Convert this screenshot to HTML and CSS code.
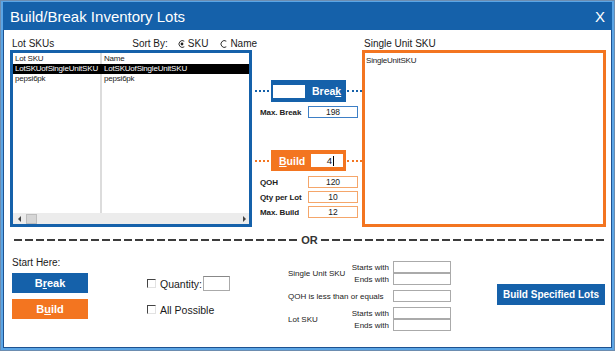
FILE: index.html
```html
<!DOCTYPE html>
<html lang="en">
<head>
    <meta charset="UTF-8">
    <meta name="viewport" content="width=device-width, initial-scale=1.0">
    <title>Build/Break Inventory Lots</title>
    <link rel="stylesheet" href="styles.css">
</head>
<body>
    <div class="window">
        <div class="inner">
            <div class="titlebar">
                <span>Build/Break Inventory Lots</span>
                <span class="close">X</span>
            </div>

            <div class="top">
                <!-- lot list -->
                <div class="col-left">
                    <div class="col-head">
                        <span>Lot SKUs</span>
                        <div class="sort">
                            <span>Sort By:</span>
                            <span class="radio">
                                <svg width="8" height="8" viewBox="0 0 8 8"><path d="M6.3 1.2 A3.4 3.4 0 1 0 6.3 6.8" stroke="#333" stroke-width="1" fill="none"/><circle cx="4" cy="4" r="1.4" fill="#222"/></svg>
                                SKU
                            </span>
                            <span class="radio">
                                <svg width="8" height="8" viewBox="0 0 8 8"><path d="M6.3 1.2 A3.4 3.4 0 1 0 6.3 6.8" stroke="#333" stroke-width="1" fill="none"/></svg>
                                Name
                            </span>
                        </div>
                    </div>
                    <div class="listbox">
                        <div class="rows">
                            <div class="row row-head"><span>Lot SKU</span><span>Name</span></div>
                            <div class="row selected"><span>LotSKUofSingleUnitSKU</span><span>LotSKUofSingleUnitSKU</span></div>
                            <div class="row"><span>pepsi6pk</span><span>pepsi6pk</span></div>
                        </div>
                        <div class="hscroll">
                            <span class="arrow-left"></span>
                            <span class="thumb"></span>
                            <span class="arrow-right"></span>
                        </div>
                    </div>
                </div>

                <!-- break / build controls -->
                <div class="col-mid">
                    <div class="connect-row">
                        <span class="dots dots-left"></span>
                        <div class="mid-btn">
                            <span class="white-box"></span>
                            <span class="break-text">Brea<u>k</u></span>
                        </div>
                        <span class="dots dots-right"></span>
                    </div>
                    <div class="field-row first">
                        <span class="field-label">Max. Break</span>
                        <span class="val">198</span>
                    </div>

                    <div class="connect-row build-row">
                        <span class="dots dots-left orange"></span>
                        <div class="mid-btn orange">
                            <span class="build-text"><u>B</u>uild</span>
                            <span class="white-box qty">4<span class="caret"></span></span>
                        </div>
                        <span class="dots dots-right orange"></span>
                    </div>
                    <div class="field-row first">
                        <span class="field-label">QOH</span>
                        <span class="val orange">120</span>
                    </div>
                    <div class="field-row">
                        <span class="field-label">Qty per Lot</span>
                        <span class="val orange">10</span>
                    </div>
                    <div class="field-row">
                        <span class="field-label">Max. Build</span>
                        <span class="val orange">12</span>
                    </div>
                </div>

                <!-- single unit -->
                <div class="col-right">
                    <div class="col-head">Single Unit SKU</div>
                    <div class="skubox">SingleUnitSKU</div>
                </div>
            </div>

            <div class="or-line">
                <span class="dash"></span>
                <span class="or">OR</span>
                <span class="dash"></span>
            </div>

            <div class="bottom">
                <div class="start">
                    <div class="start-label">Start Here:</div>
                    <div class="big-btn">B<u>r</u>eak</div>
                    <div class="big-btn orange">B<u>u</u>ild</div>
                </div>

                <div class="checks">
                    <div class="check-row">
                        <span class="check"></span>
                        <span>Quantity:</span>
                        <span class="qty-input"></span>
                    </div>
                    <div class="check-row">
                        <span class="check"></span>
                        <span>All Possible</span>
                    </div>
                </div>

                <div class="filters">
                    <div class="fgroup">
                        <span class="flabel">Single Unit SKU</span>
                        <div class="sub-rows">
                            <div class="sub-row"><span class="sub-label">Starts with</span><span class="finput"></span></div>
                            <div class="sub-row"><span class="sub-label">Ends with</span><span class="finput"></span></div>
                        </div>
                    </div>
                    <div class="fgroup">
                        <span class="flabel wide">QOH is less than or equals</span>
                        <span class="finput"></span>
                    </div>
                    <div class="fgroup">
                        <span class="flabel">Lot SKU</span>
                        <div class="sub-rows">
                            <div class="sub-row"><span class="sub-label">Starts with</span><span class="finput"></span></div>
                            <div class="sub-row"><span class="sub-label">Ends with</span><span class="finput"></span></div>
                        </div>
                    </div>
                </div>

                <div class="spec-btn">Build Specified Lots</div>
            </div>
        </div>
    </div>
</body>
</html>
```

FILE: styles.css
```css
* {
    box-sizing: border-box;
}

body {
    margin: 0;
    font-family: 'Liberation Sans', Arial, sans-serif;
    color: #1a1a1a;
    background: #fff;
}

.window {
    width: 615px;
    height: 351px;
    border: 1px solid #6d8db0;
    padding: 1px 2px 2px;
    background: #5ba5e5;
}

.inner {
    height: 100%;
    background: #fff;
    border: 1px solid #1d5290;
    border-top: none;
}

.titlebar {
    height: 28px;
    margin: 0 -1px;
    padding: 0 7px 0 7px;
    background: #1561aa;
    color: #fff;
    font-size: 15px;
    display: flex;
    align-items: center;
    justify-content: space-between;
}

/* top area */
.top {
    display: flex;
    padding: 7px 0 0 6px;
}

.col-head {
    height: 13px;
    padding-left: 2px;
    font-size: 10px;
    line-height: 13px;
    white-space: nowrap;
    display: flex;
    align-items: center;
}

.col-left {
    width: 242px;
}

.sort {
    display: flex;
    align-items: center;
    margin-left: 78px;
}

.radio {
    display: flex;
    align-items: center;
    gap: 2px;
    margin-left: 10px;
}

.radio + .radio {
    margin-left: 12px;
}

.listbox {
    height: 177px;
    border: 3px solid #1561aa;
    display: flex;
    flex-direction: column;
}

.rows {
    flex: 1;
    font-size: 8px;
    color: #222;
    background: linear-gradient(to right, transparent 87px, #dcdcdc 87px, #dcdcdc 89px, transparent 89px);
}

.row {
    display: grid;
    grid-template-columns: 89px 1fr;
    height: 10px;
    line-height: 10px;
    letter-spacing: -0.2px;
}

.row span {
    padding-left: 2px;
    white-space: nowrap;
    overflow: hidden;
}

.row-head {
    height: 11px;
    line-height: 11px;
}

.selected {
    background: #000;
    color: #fff;
}

.hscroll {
    height: 11px;
    background: #ececec;
    display: flex;
    align-items: center;
    padding-left: 5px;
}

.arrow-left {
    border-right: 3px solid #444;
    border-top: 3px solid transparent;
    border-bottom: 3px solid transparent;
}

.thumb {
    width: 11px;
    height: 10px;
    margin-left: 5px;
    background: #d6d6d6;
    border: 1px solid #bdbdbd;
}

.arrow-right {
    margin-left: auto;
    margin-right: 3px;
    border-left: 3px solid #444;
    border-top: 3px solid transparent;
    border-bottom: 3px solid transparent;
}

/* middle */
.col-mid {
    width: 110px;
    padding-top: 43px;
}

.connect-row {
    display: flex;
    align-items: center;
    height: 22px;
}

.build-row {
    height: 21px;
    margin-top: 32px;
}

.dots {
    height: 0;
    border-top: 2px dotted #1561aa;
}

.dots.orange {
    border-top-color: #f37520;
}

.dots-left {
    width: 14px;
    margin: 0 2px 0 3px;
}

.dots-right {
    width: 15px;
    margin-left: 1px;
}

.mid-btn {
    width: 75px;
    height: 100%;
    background: #1561aa;
    color: #fff;
    font-weight: bold;
    font-size: 10.5px;
    display: flex;
    align-items: center;
    padding: 0 3px 0 2px;
}

.mid-btn.orange {
    background: #f37520;
    padding-left: 8px;
}

.white-box {
    width: 32px;
    height: 13px;
    background: #fff;
}

.break-text {
    margin-left: 7px;
}

.white-box.qty {
    margin-left: auto;
    color: #111;
    font-weight: normal;
    font-size: 9.5px;
    display: flex;
    align-items: center;
    justify-content: flex-end;
    padding-right: 9px;
}

.caret {
    width: 1px;
    height: 10px;
    margin-left: 1px;
    background: #000;
}

.field-row {
    display: flex;
    align-items: center;
    height: 12px;
    padding-left: 8px;
    margin-top: 3px;
}

.field-row.first {
    margin-top: 4px;
}

.build-row + .field-row.first {
    margin-top: 5px;
}

.field-label {
    width: 48px;
    font-size: 8px;
    font-weight: bold;
    color: #222;
    white-space: nowrap;
    letter-spacing: -0.1px;
}

.val {
    width: 50px;
    height: 12px;
    border: 1px solid #3d7fc6;
    font-size: 8.5px;
    line-height: 10px;
    text-align: center;
    color: #222;
}

.val.orange {
    border-color: #f5a66a;
}

/* right */
.col-right {
    width: 244px;
}

.skubox {
    height: 177px;
    border: 3px solid #f37520;
    padding: 3px 1px;
    font-size: 8px;
    letter-spacing: -0.2px;
    color: #222;
}

/* divider */
.or-line {
    display: flex;
    align-items: center;
    height: 10px;
    margin-top: 8px;
    padding: 0 6px 0 10px;
}

.dash {
    flex: 1;
    height: 2px;
    background: repeating-linear-gradient(to right, #3c3c3c 0 8px, transparent 8px 11px);
}

.or {
    margin: 0 3px;
    font-size: 11px;
    font-weight: bold;
    color: #333;
}

/* bottom */
.bottom {
    display: flex;
    align-items: flex-start;
    padding: 10px 6px 0 8px;
}

.start {
    width: 76px;
    margin-top: 2px;
}

.start-label {
    font-size: 10px;
    line-height: 12px;
}

.big-btn {
    height: 20px;
    margin-top: 4px;
    background: #1561aa;
    color: #fff;
    font-size: 11px;
    font-weight: bold;
    display: flex;
    align-items: center;
    justify-content: center;
}

.big-btn.orange {
    margin-top: 6px;
    background: #f37520;
}

.checks {
    width: 141px;
    margin: 21px 0 0 59px;
    font-size: 10.5px;
}

.check-row {
    display: flex;
    align-items: center;
    height: 15px;
}

.check-row + .check-row {
    margin-top: 11px;
}

.check {
    width: 9px;
    height: 9px;
    margin-right: 4px;
    border-top: 1px solid #444;
    border-left: 1px solid #444;
    border-right: 1px solid #e2e2e2;
    border-bottom: 1px solid #e2e2e2;
}

.qty-input {
    width: 27px;
    height: 15px;
    margin-left: 1px;
    border: 1px solid #aaa;
    border-top-color: #888;
}

.filters {
    width: 163px;
    margin-top: 6px;
    font-size: 8px;
    color: #222;
}

.fgroup {
    display: flex;
    align-items: center;
}

.fgroup + .fgroup {
    margin-top: 5px;
}

.flabel {
    width: 54px;
    white-space: nowrap;
}

.flabel.wide {
    width: 105px;
}

.sub-row {
    display: flex;
    align-items: center;
    height: 12px;
}

.sub-label {
    width: 47px;
    margin-right: 4px;
    text-align: right;
    white-space: nowrap;
}

.finput {
    width: 58px;
    height: 12px;
    border: 1px solid #aaa;
}

.spec-btn {
    width: 108px;
    height: 21px;
    margin: 29px 0 0 46px;
    background: #1561aa;
    color: #fff;
    font-size: 10px;
    font-weight: bold;
    display: flex;
    align-items: center;
    justify-content: center;
}
```
